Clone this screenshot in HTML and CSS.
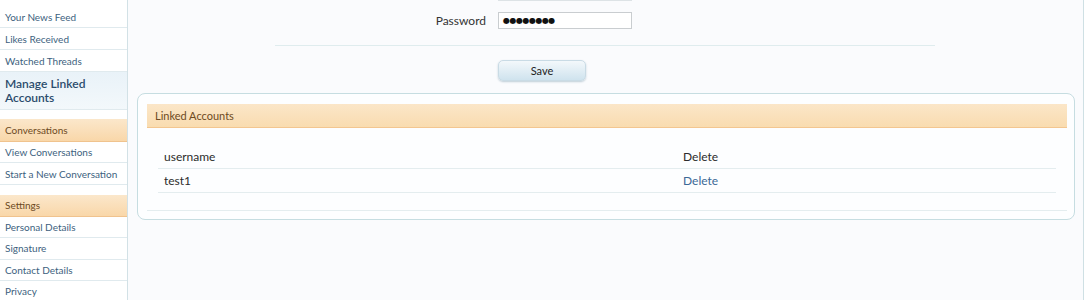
FILE: index.html
```html
<!DOCTYPE html>
<html>
<head>
<meta charset="utf-8">
<link rel="stylesheet" href="styles.css">
</head>
<body>
<div class="page">
  <nav class="sidebar">
    <ul class="menu">
      <li class="item"><a>Your News Feed</a></li>
      <li class="item"><a>Likes Received</a></li>
      <li class="item"><a>Watched Threads</a></li>
      <li class="item selected"><a>Manage Linked Accounts</a></li>
    </ul>
    <h3 class="section">Conversations</h3>
    <ul class="menu compact">
      <li class="item"><a>View Conversations</a></li>
      <li class="item"><a>Start a New Conversation</a></li>
    </ul>
    <h3 class="section">Settings</h3>
    <ul class="menu compact">
      <li class="item"><a>Personal Details</a></li>
      <li class="item"><a>Signature</a></li>
      <li class="item"><a>Contact Details</a></li>
      <li class="item"><a>Privacy</a></li>
    </ul>
  </nav>
  <main class="content">
    <div class="form">
      <div class="prev-input"></div>
      <div class="ctrl-row">
        <label class="ctrl-label">Password</label>
        <div class="input">●●●●●●●●</div>
      </div>
      <div class="divider"></div>
      <div class="submit-row"><button class="button">Save</button></div>
    </div>
    <section class="box">
      <h2 class="box-head">Linked Accounts</h2>
      <div class="table">
        <div class="row head"><span class="c1">username</span><span class="c2">Delete</span></div>
        <div class="row"><span class="c1">test1</span><a class="c2 link">Delete</a></div>
      </div>
      <div class="box-foot"></div>
    </section>
  </main>
  <div class="edge"></div>
</div>
</body>
</html>
```
FILE: styles.css
```css
* { box-sizing: border-box; }
html, body { margin: 0; padding: 0; }
body {
  width: 1091px; height: 300px; overflow: hidden;
  background: #ffffff;
  font-family: "Lato", "Open Sans", sans-serif;
  color: #333;
}
.page { display: flex; height: 300px; }

.sidebar {
  width: 128px; flex: none;
  border-right: 1px solid #d2e1e6;
  background: #fff;
  padding-top: 6px;
}
.menu { list-style: none; margin: 0; padding: 0; }
.item {
  height: 22px;
  border-bottom: 1px solid #e0eaee;
  display: flex; align-items: center;
  padding-left: 5px;
  font-size: 10px;
  color: #3d5f7e;
  white-space: nowrap;
}
.compact .item { height: 21.4px; }
.item.selected {
  align-items: flex-start;
  background: linear-gradient(#e9f2f8, #f3f8fb);
  font-size: 12px;
  color: #2b4c6c;
  font-weight: 600;
  line-height: 14px;
  padding-top: 5px;
  height: 38px;
  white-space: normal;
}
.section {
  margin: 9px 0 0 0;
  height: 23px;
  display: flex; align-items: center;
  padding-left: 5px;
  font-size: 10px; font-weight: normal;
  color: #6d4a23;
  background: linear-gradient(#fbe7cb, #f9d7a9);
  border-bottom: 1px solid #f0c38e;
}
.compact + .section { margin-top: 10px; height: 22px; }

.content {
  flex: 1;
  background: #fafbfd;
  padding: 0 0 0 9px;
}
.form { width: 938px; }
.prev-input {
  margin-left: 361px; width: 134px; height: 1px;
  border-bottom: 1px solid #dde3e6;
}
.ctrl-row { display: flex; align-items: center; margin-top: 11px; height: 17px; }
.ctrl-label {
  width: 361px; text-align: right; font-size: 12px; color: #333;
  padding-right: 12px;
}
.input {
  width: 134px; height: 17px;
  border: 1px solid #c9cdd0; background: #fff;
  font-size: 8px; line-height: 15px; padding-left: 4px;
  letter-spacing: -0.5px; color: #111;
  font-family: "DejaVu Sans", sans-serif;
}
.divider {
  margin: 16px 0 0 138px; width: 660px;
  border-top: 1px solid #dfecee;
}
.submit-row { padding-left: 361px; margin-top: 13px; height: 21px; }
.button {
  width: 88px; height: 21px;
  border: 1px solid #c9dbe5;
  border-radius: 5px;
  background: linear-gradient(#f3f8fb, #cfe3ee);
  box-shadow: 0 1px 2px rgba(120,150,170,0.45);
  font-family: inherit; font-size: 11px; color: #222;
  padding: 0;
}

.box {
  margin-top: 13px; width: 938px;
  border: 1px solid #c6dde1; border-radius: 8px;
  background: #fdfeff;
  padding: 10px 7px 8px 9px;
  height: 127px;
}
.box-head {
  margin: 0; height: 24px;
  display: flex; align-items: center;
  padding-left: 8px;
  font-size: 11px; font-weight: normal; color: #6d4a23;
  background: linear-gradient(#fbe6c8, #f9dcb0);
  border-bottom: 1px solid #f3c690;
}
.table { margin: 17px 11px 0 11px; }
.row {
  display: flex; align-items: center;
  height: 24px; border-bottom: 1px solid #e4edef;
  font-size: 12px; color: #2c2c2c;
}
.c1 { width: 525px; padding-left: 6px; }
.link { color: #3b6996; }
.box-foot { margin-top: 17px; border-top: 1px solid #e4edef; }

.edge { width: 8px; flex: none; border-left: 1px solid #cfe0e4; background: #fff; }
```
